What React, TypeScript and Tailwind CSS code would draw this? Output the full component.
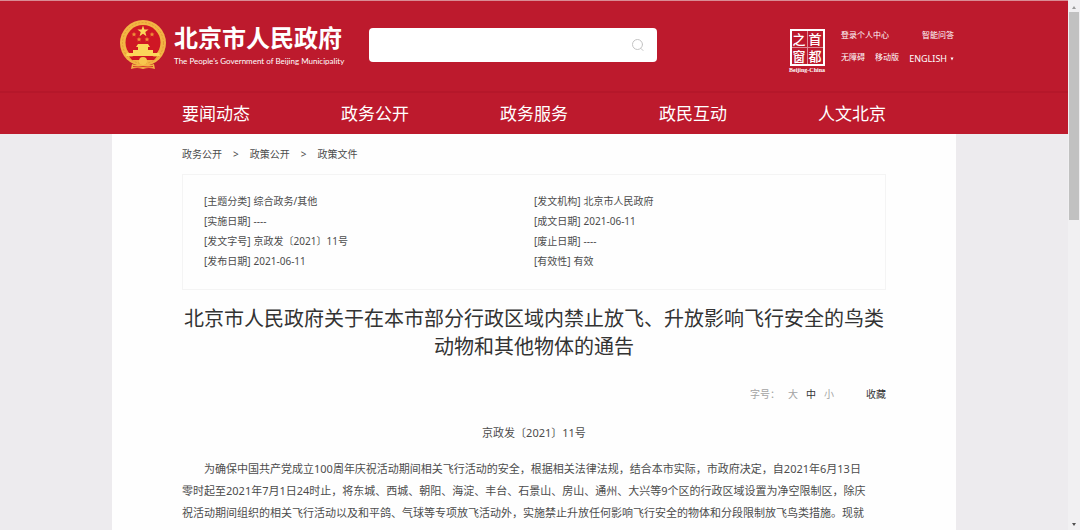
import React from 'react';

const NAV_ITEMS = ['要闻动态', '政务公开', '政务服务', '政民互动', '人文北京'];

const CRUMBS = ['政务公开', '政策公开', '政策文件'];

const META_COLUMNS = [
  [
    { label: '主题分类', value: '综合政务/其他' },
    { label: '实施日期', value: '----' },
    { label: '发文字号', value: '京政发〔2021〕11号' },
    { label: '发布日期', value: '2021-06-11' },
  ],
  [
    { label: '发文机构', value: '北京市人民政府' },
    { label: '成文日期', value: '2021-06-11' },
    { label: '废止日期', value: '----' },
    { label: '有效性', value: '有效' },
  ],
];

function Emblem() {
  return (
    <svg viewBox="0 0 48 52" className="w-12 h-[52px] shrink-0" aria-hidden="true">
      <circle cx="24" cy="24" r="23" fill="#f3b544" />
      <circle cx="24" cy="24" r="20.5" fill="none" stroke="#e39a35" strokeWidth="1" strokeDasharray="2 1.5" />
      <circle cx="24" cy="23.5" r="17.5" fill="#cf1724" />
      <path
        d="M24 6.5 L25.4 10.4 L29.6 10.6 L26.3 13.1 L27.4 17.2 L24 14.8 L20.6 17.2 L21.7 13.1 L18.4 10.6 L22.6 10.4 Z"
        fill="#fbd75a"
      />
      <g fill="#f08f38">
        <path d="M15 13 L15.7 14.6 L17.4 14.7 L16.1 15.8 L16.5 17.5 L15 16.6 L13.5 17.5 L13.9 15.8 L12.6 14.7 L14.3 14.6 Z" />
        <path d="M33 13 L33.7 14.6 L35.4 14.7 L34.1 15.8 L34.5 17.5 L33 16.6 L31.5 17.5 L31.9 15.8 L30.6 14.7 L32.3 14.6 Z" />
        <path d="M20 18 L20.7 19.6 L22.4 19.7 L21.1 20.8 L21.5 22.5 L20 21.6 L18.5 22.5 L18.9 20.8 L17.6 19.7 L19.3 19.6 Z" />
        <path d="M28 18 L28.7 19.6 L30.4 19.7 L29.1 20.8 L29.5 22.5 L28 21.6 L26.5 22.5 L26.9 20.8 L25.6 19.7 L27.3 19.6 Z" />
      </g>
      <path
        d="M19 25 H29 L31 28 H29 V31 H34 V34 H40 L41 37 H7 L8 34 H14 V31 H19 V28 H17 Z"
        fill="#fbd75a"
      />
      <path d="M10 37.5 H38 L35 41 H13 Z" fill="#cf1724" />
      <circle cx="24" cy="42" r="4" fill="#f7c64e" />
      <path d="M13 45 Q18 47 22 45 L24 47 L26 45 Q30 47 35 45 L36 50 Q30 48 24 50 Q18 48 12 50 Z" fill="#f3b544" />
      <path d="M14 47.5 Q19 48.5 24 47.5 Q29 48.5 34 47.5" fill="none" stroke="#cf1724" strokeWidth="0.8" />
    </svg>
  );
}

function Seal() {
  return (
    <a href="#" className="flex flex-col items-center w-10 text-white">
      <span className="grid grid-cols-2 gap-px border-2 border-white bg-white/50 w-[35px] font-medium text-[13px] leading-4 text-center">
        {['之', '首', '窗', '都'].map((char) => (
          <span key={char} className="bg-[#bd1a2d]">
            {char}
          </span>
        ))}
      </span>
      <span className="font-['Liberation_Serif',serif] font-bold text-[6px] leading-2 whitespace-nowrap">
        Beijing-China
      </span>
    </a>
  );
}

function Header() {
  return (
    <header className="bg-[#bd1a2d] border-t border-[#d98c94] text-white">
      <div className="max-w-[844px] mx-auto h-[90px] flex items-start pl-[7px]">
        <a href="#" className="flex items-start gap-[7px] pt-[18px]">
          <Emblem />
          <span className="pt-1 w-[173px]">
            <span className="block font-bold text-[24px] leading-[30px] whitespace-nowrap">北京市人民政府</span>
            <span className="block font-['Lato',sans-serif] text-[8px] leading-4 whitespace-nowrap">
              The People's Government of Beijing Municipality
            </span>
          </span>
        </a>
        <form className="ml-[22px] mt-[27px] w-72 h-[34px] flex items-center rounded bg-white pr-3">
          <input type="text" aria-label="搜索" className="flex-1 min-w-0 h-full px-3 text-sm text-gray-700 outline-none" />
          <button type="button" aria-label="搜索">
            <svg viewBox="0 0 14 14" className="size-3.5" fill="none" stroke="#c4c4c4" strokeLinecap="round">
              <circle cx="6.5" cy="6.5" r="5" />
              <path d="M10 10.5 L12 12.5" />
            </svg>
          </button>
        </form>
        <div className="ml-auto flex items-start gap-[14px] pt-7 pr-[2px]">
          <Seal />
          <div className="w-[113px] text-[8px] leading-3 whitespace-nowrap">
            <div className="flex justify-between">
              <a href="#">登录个人中心</a>
              <a href="#">智能问答</a>
            </div>
            <div className="flex justify-between mt-2.5">
              <a href="#">无障碍</a>
              <a href="#">移动版</a>
              <a href="#" className="flex items-center gap-[3px] pt-[2px] text-[9px]">
                ENGLISH
                <svg viewBox="0 0 4 4" className="size-1" fill="currentColor" aria-hidden="true">
                  <path d="M0.5 0.5 H3.5 L2 3.5 Z" />
                </svg>
              </a>
            </div>
          </div>
        </div>
      </div>
      <nav className="border-t-2 border-[#b5172a]">
        <ul className="max-w-[844px] mx-auto px-[70px] flex justify-between text-[17px] leading-[41px]">
          {NAV_ITEMS.map((item) => (
            <li key={item}>
              <a href="#">{item}</a>
            </li>
          ))}
        </ul>
      </nav>
    </header>
  );
}

function MetaPanel() {
  return (
    <section className="mt-[10px] grid grid-cols-[330px_1fr] border border-[#f4f4f4] pl-[21px] py-4 pb-[18px] text-[10px] leading-5">
      {META_COLUMNS.map((rows, index) => (
        <dl key={index}>
          {rows.map((row) => (
            <div key={row.label} className="flex gap-[3px]">
              <dt>[{row.label}]</dt>
              <dd>{row.value}</dd>
            </div>
          ))}
        </dl>
      ))}
    </section>
  );
}

function ScrollBar() {
  return (
    <div className="w-3 shrink-0 flex flex-col items-center justify-between bg-[#f1f0f2]" aria-hidden="true">
      <div className="w-full flex flex-col items-center">
        <svg viewBox="0 0 12 12" className="size-3" fill="#9a9a9a">
          <path d="M4 9 L6 6 L8 9 Z" />
        </svg>
        <div className="w-2.5 h-52 bg-[#c1c1c1]" />
      </div>
      <svg viewBox="0 0 12 12" className="size-3" fill="#505050">
        <path d="M4 5 H8 L6 8 Z" />
      </svg>
    </div>
  );
}

export default function App() {
  return (
    <div
      lang="zh-CN"
      className="h-screen flex overflow-hidden bg-[#edebee] text-[#4c4c4c] font-['Noto_Sans','Noto_Sans_CJK_SC',sans-serif]"
    >
      <div className="flex-1 min-w-0 flex flex-col">
        <Header />
        <main className="flex-1 w-full max-w-[844px] mx-auto px-[70px] pt-[10px] bg-[#fefefe]">
          <nav className="flex gap-[11px] text-[10px] leading-5">
            {CRUMBS.map((crumb, index) => (
              <React.Fragment key={crumb}>
                {index > 0 && <span>&gt;</span>}
                <a href="#">{crumb}</a>
              </React.Fragment>
            ))}
          </nav>

          <MetaPanel />

          <h1 className="mt-[15px] text-center text-[20px] leading-7 text-[#333333]">
            北京市人民政府关于在本市部分行政区域内禁止放飞、升放影响飞行安全的鸟类动物和其他物体的通告
          </h1>

          <div className="mt-[23px] flex justify-end text-[10px] leading-5 text-[#a3a3a3]">
            <span>字号：</span>
            <div className="flex gap-2 ml-2">
              <button type="button">大</button>
              <button type="button" className="text-[#333333]">
                中
              </button>
              <button type="button">小</button>
            </div>
            <button type="button" className="ml-8 text-[#333333]">
              收藏
            </button>
          </div>

          <p className="mt-[18px] text-center text-[11px] leading-[22px]">京政发〔2021〕11号</p>
          <p className="mt-[14px] indent-[22px] text-[11px] leading-[22px]">
            为确保中国共产党成立100周年庆祝活动期间相关飞行活动的安全，根据相关法律法规，结合本市实际，市政府决定，自2021年6月13日
            <br />
            零时起至2021年7月1日24时止，将东城、西城、朝阳、海淀、丰台、石景山、房山、通州、大兴等9个区的行政区域设置为净空限制区，除庆
            <br />
            祝活动期间组织的相关飞行活动以及和平鸽、气球等专项放飞活动外，实施禁止升放任何影响飞行安全的物体和分段限制放飞鸟类措施。现就
          </p>
        </main>
      </div>
      <ScrollBar />
    </div>
  );
}
